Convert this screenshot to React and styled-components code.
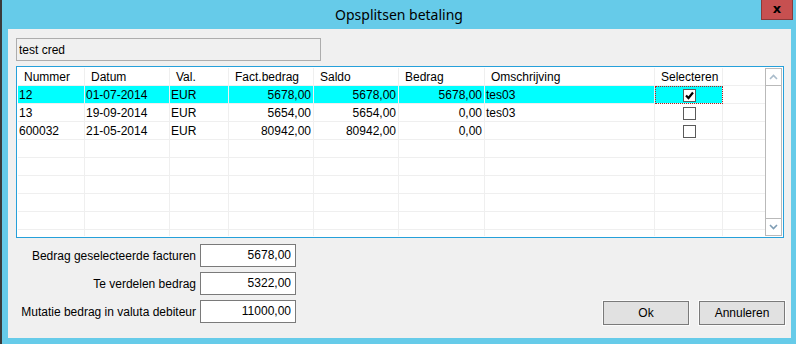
import React from "react";
import styled, { createGlobalStyle } from "styled-components";

const columns = [
    { key: "nummer", title: "Nummer", width: 67 },
    { key: "datum", title: "Datum", width: 85 },
    { key: "val", title: "Val.", width: 59 },
    { key: "fact", title: "Fact.bedrag", width: 85, right: true },
    { key: "saldo", title: "Saldo", width: 85, right: true },
    { key: "bedrag", title: "Bedrag", width: 86, right: true },
    { key: "oms", title: "Omschrijving", width: 170 },
    { key: "sel", title: "Selecteren", width: 68, check: true },
];

const rows = [
    { nummer: "12", datum: "01-07-2014", val: "EUR", fact: "5678,00", saldo: "5678,00", bedrag: "5678,00", oms: "tes03", sel: true },
    { nummer: "13", datum: "19-09-2014", val: "EUR", fact: "5654,00", saldo: "5654,00", bedrag: "0,00", oms: "tes03", sel: false },
    { nummer: "600032", datum: "21-05-2014", val: "EUR", fact: "80942,00", saldo: "80942,00", bedrag: "0,00", oms: "", sel: false },
];

const EMPTY_ROWS = 7;
const template = columns.map((c) => c.width + "px").join(" ") + " 1fr";

export default function App() {
    return (
        <>
            <GlobalStyle />
            <Frame>
                <TitleBar>
                    <span />
                    <Title>Opsplitsen betaling</Title>
                    <CloseButton>x</CloseButton>
                </TitleBar>
                <Client>
                    <NameField readOnly value="test cred" />
                    <GridBox>
                        <TableArea>
                            <Row>
                                {columns.map((c) => (
                                    <HeaderCell key={c.key}>{c.title}</HeaderCell>
                                ))}
                                <Filler />
                            </Row>
                            {rows.map((r, i) => (
                                <Row key={r.nummer}>
                                    {columns.map((c) => (
                                        <Cell
                                            key={c.key}
                                            $right={c.right}
                                            $center={c.check}
                                            $selected={i === 0}
                                            $focus={i === 0 && c.check}
                                        >
                                            {c.check ? <CheckBox checked={r[c.key]} /> : r[c.key]}
                                        </Cell>
                                    ))}
                                    <Filler />
                                </Row>
                            ))}
                            {Array.from({ length: EMPTY_ROWS }).map((_, i) => (
                                <Row key={"e" + i}>
                                    {columns.map((c) => (
                                        <Cell key={c.key} />
                                    ))}
                                    <Filler />
                                </Row>
                            ))}
                        </TableArea>
                        <ScrollBar>
                            <ScrollButton>
                                <Arrow up />
                            </ScrollButton>
                            <ScrollTrack />
                            <ScrollButton $bottom>
                                <Arrow />
                            </ScrollButton>
                        </ScrollBar>
                    </GridBox>
                    <Bottom>
                        <Form>
                            <Label>Bedrag geselecteerde facturen</Label>
                            <AmountField readOnly value="5678,00" />
                            <Label>Te verdelen bedrag</Label>
                            <AmountField readOnly value="5322,00" />
                            <Label>Mutatie bedrag in valuta debiteur</Label>
                            <AmountField readOnly value="11000,00" />
                        </Form>
                        <Buttons>
                            <Button>Ok</Button>
                            <Button>Annuleren</Button>
                        </Buttons>
                    </Bottom>
                </Client>
            </Frame>
        </>
    );
}

function CheckBox({ checked }) {
    return (
        <Check>
            {checked && (
                <svg width="11" height="11" viewBox="0 0 11 11">
                    <path d="M2 5.5 L4.5 8 L9 2.5" fill="none" stroke="#000" strokeWidth="2.2" />
                </svg>
            )}
        </Check>
    );
}

function Arrow({ up }) {
    return (
        <svg width="9" height="6" viewBox="0 0 9 6">
            <polyline
                points={up ? "1,5 4.5,1.5 8,5" : "1,1 4.5,4.5 8,1"}
                fill="none"
                stroke={up ? "#a9bccb" : "#7f9db4"}
                strokeWidth="1.6"
            />
        </svg>
    );
}

const GlobalStyle = createGlobalStyle`
    body {
        margin: 0;
        font-family: "Liberation Sans", Arial, sans-serif;
        font-size: 12px;
        color: #000;
    }
`;

const Frame = styled.div`
    width: 796px;
    height: 344px;
    box-sizing: border-box;
    background: #66cbe9;
    border-left: 2px solid #3a3a3a;
    display: flex;
    flex-direction: column;
    overflow: hidden;
`;

const TitleBar = styled.div`
    height: 29px;
    display: grid;
    grid-template-columns: 1fr auto 1fr;
    align-items: center;
`;

const Title = styled.div`
    font-family: "Noto Sans", sans-serif;
    font-size: 14px;
    margin-top: -1px;
`;

const CloseButton = styled.div`
    justify-self: end;
    align-self: start;
    width: 32px;
    height: 20px;
    box-sizing: border-box;
    margin-right: 3px;
    background: #c75050;
    border: 1px solid #8a3a3a;
    border-top: none;
    display: flex;
    align-items: center;
    justify-content: center;
    font-family: "DejaVu Sans", sans-serif;
    font-weight: bold;
    font-size: 13px;
    padding-bottom: 2px;
`;

const Client = styled.div`
    flex: 1;
    margin: 0 5px 6px 6px;
    background: #f0f0f0;
    padding: 9px 7px 0 8px;
    display: flex;
    flex-direction: column;
`;

const NameField = styled.input`
    width: 305px;
    height: 23px;
    box-sizing: border-box;
    border: 1px solid #adadad;
    background: #f0f0f0;
    font: inherit;
    padding: 0 2px;
    margin: 0;
    outline: none;
`;

const GridBox = styled.div`
    margin-top: 5px;
    width: 768px;
    height: 172px;
    box-sizing: border-box;
    border: 1px solid #26a0da;
    background: #fff;
    padding: 1px;
    display: flex;
`;

const TableArea = styled.div`
    flex: 1;
    overflow: hidden;
`;

const Row = styled.div`
    display: grid;
    grid-template-columns: ${template};
    height: 18px;
`;

const Cell = styled.div`
    box-sizing: border-box;
    border-right: 1px solid #efefef;
    border-bottom: 1px solid #efefef;
    background: ${(p) => (p.$selected ? "#00ffff" : "#fff")};
    display: flex;
    align-items: center;
    justify-content: ${(p) => (p.$right ? "flex-end" : p.$center ? "center" : "flex-start")};
    padding: ${(p) => (p.$right ? "0 2px 0 0" : "0 0 0 1px")};
    white-space: nowrap;
    outline: ${(p) => (p.$focus ? "1px dotted #b02020" : "none")};
    outline-offset: -1px;
`;

const HeaderCell = styled(Cell)`
    padding: 0 0 0 6px;
    background: #fff;
`;

const Filler = styled.div`
    border-bottom: 1px solid #efefef;
`;

const Check = styled.span`
    width: 13px;
    height: 13px;
    box-sizing: border-box;
    border: 1px solid #5a5a5a;
    background: #fff;
    display: flex;
    align-items: center;
    justify-content: center;
    margin-top: 1px;
`;

const ScrollBar = styled.div`
    width: 17px;
    box-sizing: border-box;
    border: 1px solid #b9b9b9;
    display: flex;
    flex-direction: column;
    background: #fff;
`;

const ScrollButton = styled.div`
    height: 16px;
    display: flex;
    align-items: center;
    justify-content: center;
    border-top: ${(p) => (p.$bottom ? "1px solid #b9b9b9" : "none")};
    border-bottom: ${(p) => (p.$bottom ? "none" : "1px solid #b9b9b9")};
`;

const ScrollTrack = styled.div`
    flex: 1;
`;

const Bottom = styled.div`
    display: flex;
    justify-content: space-between;
    align-items: flex-start;
    margin-top: 6px;
    width: 769px;
`;

const Form = styled.div`
    display: grid;
    grid-template-columns: 180px 96px;
    column-gap: 4px;
    row-gap: 5px;
`;

const Label = styled.div`
    text-align: right;
    align-self: center;
    white-space: nowrap;
`;

const AmountField = styled.input`
    height: 23px;
    width: 96px;
    box-sizing: border-box;
    border: 1px solid #7a7a7a;
    background: #fff;
    font: inherit;
    text-align: right;
    padding: 0 4px 2px 0;
    margin: 0;
    outline: none;
`;

const Buttons = styled.div`
    display: flex;
    gap: 10px;
    margin-top: 57px;
`;

const Button = styled.button`
    width: 86px;
    height: 24px;
    box-sizing: border-box;
    border: 1px solid #7a7a7a;
    background: #e1e1e1;
    font: inherit;
    color: #000;
    padding: 0;
    box-shadow: 0 0 0 1px #fbfbfb;
`;
